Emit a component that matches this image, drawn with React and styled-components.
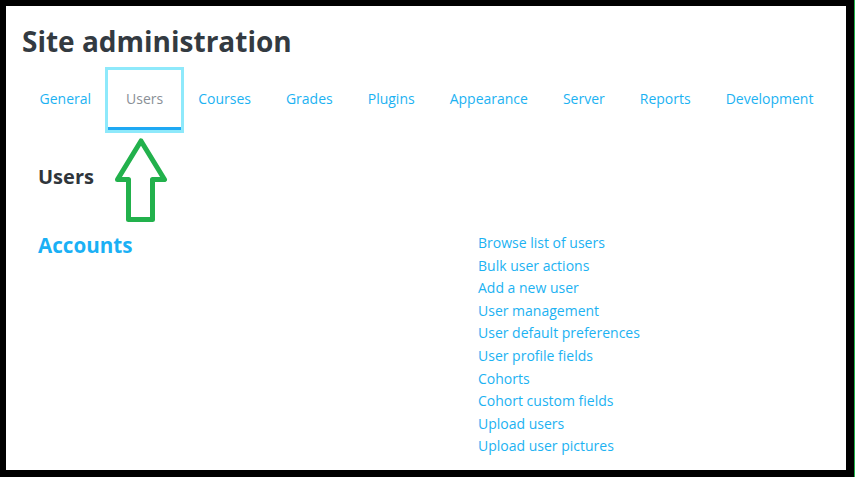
import React from 'react';
import styled, { createGlobalStyle } from 'styled-components';

const GlobalStyle = createGlobalStyle`
  html, body {
    margin: 0;
    padding: 0;
    background: #000;
  }
  body {
    font-family: "Open Sans", "Noto Sans", sans-serif;
  }
`;

const Frame = styled.div`
  width: 855px;
  height: 477px;
  box-sizing: border-box;
  padding: 6px 8px 6px 6px;
  background: #000;
  border-right: 1px solid #22b14c;
`;

const Page = styled.div`
  position: relative;
  height: 464px;
  background: #fff;
  padding: 0 16px;
  overflow: hidden;
`;

const Title = styled.h1`
  margin: 0;
  padding-top: 18px;
  font-size: 28px;
  font-weight: 700;
  color: #333a41;
  line-height: 34px;
`;

const Tabs = styled.nav`
  display: flex;
  margin-top: 20px;
  height: 40px;
`;

const Tab = styled.a`
  position: relative;
  display: flex;
  align-items: center;
  padding: 0 17.5px;
  font-size: 14px;
  color: ${(p) => (p.$active ? '#8a8f96' : '#1cb2f2')};
  text-decoration: none;
`;

const Highlight = styled.div`
  position: absolute;
  left: -3.5px;
  right: -3.5px;
  top: -11px;
  bottom: -15px;
  border: 3px solid #8ee9fb;
  pointer-events: none;
  &::after {
    content: '';
    position: absolute;
    left: 0;
    right: 0;
    bottom: 0;
    height: 3px;
    background: #1ea8f3;
  }
`;

const Arrow = styled.svg`
  position: absolute;
  left: 106px;
  top: 128px;
`;

const Section = styled.section`
  padding: 46px 16px 0;
`;

const SectionTitle = styled.h2`
  margin: 0;
  font-size: 20px;
  font-weight: 700;
  color: #2f353b;
  line-height: 26px;
`;

const Category = styled.div`
  display: grid;
  grid-template-columns: 440px 1fr;
  margin-top: 42px;
`;

const CategoryTitle = styled.h3`
  margin: 0;
  font-size: 20.6px;
  font-weight: 700;
  color: #1ab0f5;
  line-height: 26px;
`;

const LinkList = styled.ul`
  list-style: none;
  margin: 0;
  padding: 0;
`;

const LinkItem = styled.li`
  font-size: 14px;
  line-height: 22.6px;
  a {
    color: #1cb2f2;
    text-decoration: none;
  }
`;

const tabs = ['General', 'Users', 'Courses', 'Grades', 'Plugins', 'Appearance', 'Server', 'Reports', 'Development'];

const links = [
  'Browse list of users',
  'Bulk user actions',
  'Add a new user',
  'User management',
  'User default preferences',
  'User profile fields',
  'Cohorts',
  'Cohort custom fields',
  'Upload users',
  'Upload user pictures',
];

const App = () => (
  <>
    <GlobalStyle />
    <Frame>
      <Page>
        <Title>Site administration</Title>
        <Tabs>
          {tabs.map((t) => (
            <Tab key={t} href="#" $active={t === 'Users'}>
              {t}
              {t === 'Users' && <Highlight />}
            </Tab>
          ))}
        </Tabs>
        <Arrow width="60" height="92" viewBox="0 0 60 92">
          <path
            d="M29 7 L52.5 45.5 L40.5 45.5 L40.5 85.5 L16.5 85.5 L16.5 45.5 L5.5 45.5 Z"
            fill="#fff"
            stroke="#22b14c"
            strokeWidth="5"
            strokeLinejoin="round"
          />
        </Arrow>
        <Section>
          <SectionTitle>Users</SectionTitle>
          <Category>
            <CategoryTitle>Accounts</CategoryTitle>
            <LinkList>
              {links.map((l) => (
                <LinkItem key={l}>
                  <a href="#">{l}</a>
                </LinkItem>
              ))}
            </LinkList>
          </Category>
        </Section>
      </Page>
    </Frame>
  </>
);

export default App;
